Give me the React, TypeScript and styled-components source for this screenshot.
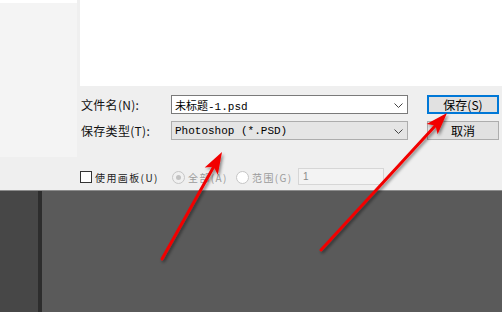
import React from 'react';
import styled, { createGlobalStyle } from 'styled-components';

const GlobalStyle = createGlobalStyle`
  html, body {
    margin: 0;
    padding: 0;
    background: #ffffff;
    overflow: hidden;
  }
  * { box-sizing: border-box; }
`;

const Screen = styled.div`
  position: relative;
  width: 502px;
  height: 312px;
  display: flex;
  flex-direction: column;
  background: #efefef;
  font-family: "Noto Sans CJK SC", "Liberation Sans", sans-serif;
  overflow: hidden;
`;

const TopArea = styled.div`
  display: flex;
  height: 157px;
`;

const Sidebar = styled.div`
  flex: none;
  width: 77px;
  background: #f4f4f4;
  border-top: 3px solid #ffffff;
`;

const MainColumn = styled.div`
  flex: 1;
  min-width: 0;
  display: flex;
  flex-direction: column;
`;

const FileList = styled.div`
  height: 86px;
  margin-left: 3px;
  background: #ffffff;
`;

const Form = styled.div`
  display: grid;
  grid-template-columns: 71px 237px 72px;
  grid-auto-rows: 19px;
  column-gap: 19px;
  row-gap: 7px;
  padding: 9px 0 0 4px;
`;

const Label = styled.div`
  display: flex;
  align-items: center;
  font-size: 12px;
  color: #111;
  white-space: nowrap;
  letter-spacing: 0.3px;
`;

const Field = styled.div<{ $filled?: boolean }>`
  position: relative;
  display: flex;
  align-items: center;
  padding: 0 18px 0 3px;
  border: 1px solid ${p => (p.$filled ? '#adadad' : '#7a7a7a')};
  background: ${p => (p.$filled ? '#e5e5e5' : '#ffffff')};
  font-family: "Liberation Mono", "Noto Sans CJK SC", monospace;
  font-size: 11px;
  color: #000;
  white-space: nowrap;
`;

const Chevron = styled.svg`
  position: absolute;
  right: 4px;
  top: 7px;
`;

const DialogButton = styled.button<{ $primary?: boolean }>`
  height: 19px;
  padding: 0;
  border: ${p => (p.$primary ? '2px solid #0078d7' : '1px solid #adadad')};
  background: #e1e1e1;
  font-family: "Noto Sans CJK SC", sans-serif;
  font-size: 12px;
  line-height: 1;
  color: #000;
`;

const OptionsRow = styled.div`
  height: 33px;
  display: flex;
  align-items: flex-start;
  padding: 14px 0 0 80px;
  background: #efefef;
`;

const Option = styled.label<{ $disabled?: boolean; $width: number }>`
  display: flex;
  align-items: center;
  width: ${p => p.$width}px;
  height: 12px;
  font-size: 10px;
  letter-spacing: 1.4px;
  color: ${p => (p.$disabled ? '#9b9b9b' : '#222')};
  white-space: nowrap;
`;

const CheckBox = styled.span`
  width: 12px;
  height: 12px;
  margin-right: 3px;
  border: 1px solid #333;
  background: #fff;
  flex: none;
`;

const Radio = styled.span<{ $checked?: boolean }>`
  position: relative;
  width: 13px;
  height: 13px;
  margin-right: 3px;
  border-radius: 50%;
  border: 1px solid #c6c6c6;
  background: ${p => (p.$checked ? '#f0f0f0' : '#ffffff')};
  flex: none;

  &::after {
    content: '';
    display: ${p => (p.$checked ? 'block' : 'none')};
    position: absolute;
    left: 3px;
    top: 3px;
    width: 5px;
    height: 5px;
    border-radius: 50%;
    background: #c2c2c2;
  }
`;

const RangeInput = styled.div`
  width: 86px;
  height: 17px;
  margin-top: -3px;
  padding-left: 4px;
  border: 1px solid #d6d6d6;
  background: #f3f3f3;
  font-family: "Liberation Sans", sans-serif;
  font-size: 10px;
  line-height: 15px;
  color: #8a8a8a;
`;

const Workspace = styled.div`
  flex: 1;
  display: flex;
  border-top: 1px solid #8c8c8c;
`;

const ToolColumn = styled.div`
  width: 38px;
  background: #474747;
`;

const Splitter = styled.div`
  width: 4px;
  background: #2d2d2d;
`;

const Canvas = styled.div`
  flex: 1;
  background: #5a5a5a;
`;

const Overlay = styled.svg`
  position: absolute;
  left: 0;
  top: 0;
  pointer-events: none;
`;

type ArrowProps = { x1: number; y1: number; x2: number; y2: number };

// red annotation arrow, head at (x2, y2)
const Arrow: React.FC<ArrowProps> = ({ x1, y1, x2, y2 }) => {
  const dx = x2 - x1;
  const dy = y2 - y1;
  const len = Math.hypot(dx, dy);
  const ux = dx / len;
  const uy = dy / len;
  const headLen = 22;
  const half = 7.5;
  const bx = x2 - ux * headLen;
  const by = y2 - uy * headLen;
  const nx = bx + ux * 5;
  const ny = by + uy * 5;
  const head = [
    `${x2},${y2}`,
    `${bx - uy * half},${by + ux * half}`,
    `${nx},${ny}`,
    `${bx + uy * half},${by - ux * half}`,
  ].join(' ');
  return (
    <g filter="url(#arrowShadow)">
      <line x1={x1} y1={y1} x2={nx} y2={ny} stroke="#f20000" strokeWidth={3} strokeLinecap="round" />
      <polygon points={head} fill="#f20000" />
    </g>
  );
};

const App: React.FC = () => {
  return (
    <Screen>
      <GlobalStyle />
      <TopArea>
        <Sidebar />
        <MainColumn>
          <FileList />
          <Form>
            <Label>文件名(N):</Label>
            <Field>
              未标题-1.psd
              <Chevron width="9" height="5" viewBox="0 0 9 5">
                <path d="M0.5 0.5 L4.5 4.5 L8.5 0.5" fill="none" stroke="#444" strokeWidth="1" />
              </Chevron>
            </Field>
            <DialogButton $primary>保存(S)</DialogButton>
            <Label>保存类型(T):</Label>
            <Field $filled>
              Photoshop (*.PSD)
              <Chevron width="9" height="5" viewBox="0 0 9 5">
                <path d="M0.5 0.5 L4.5 4.5 L8.5 0.5" fill="none" stroke="#444" strokeWidth="1" />
              </Chevron>
            </Field>
            <DialogButton>取消</DialogButton>
          </Form>
        </MainColumn>
      </TopArea>

      <OptionsRow>
        <Option $width={92}>
          <CheckBox />
          使用画板(U)
        </Option>
        <Option $disabled $width={64}>
          <Radio $checked />
          全部(A)
        </Option>
        <Option $disabled $width={62}>
          <Radio />
          范围(G)
        </Option>
        <RangeInput>1</RangeInput>
      </OptionsRow>

      <Workspace>
        <ToolColumn />
        <Splitter />
        <Canvas />
      </Workspace>

      <Overlay width="502" height="312" viewBox="0 0 502 312">
        <defs>
          <filter id="arrowShadow" x="-20%" y="-20%" width="140%" height="140%">
            <feDropShadow dx="1.5" dy="2" stdDeviation="1.5" floodColor="#000" floodOpacity="0.45" />
          </filter>
        </defs>
        <Arrow x1={162} y1={259} x2={222} y2={152} />
        <Arrow x1={321} y1={250} x2={447} y2={113} />
      </Overlay>
    </Screen>
  );
};

export default App;
